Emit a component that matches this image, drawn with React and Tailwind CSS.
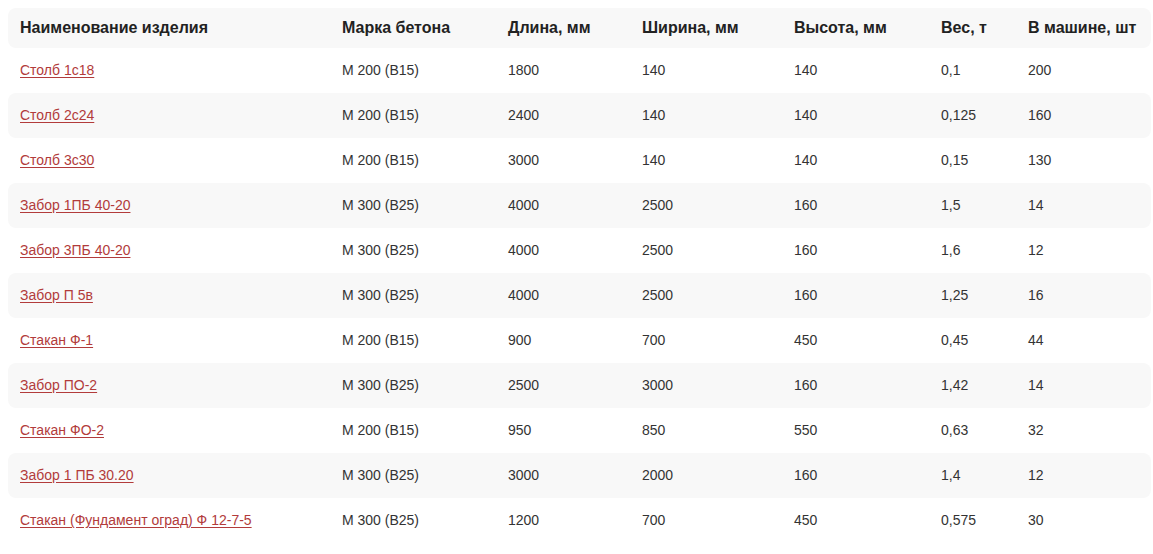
const rows = [
  ["Столб 1с18", "М 200 (В15)", "1800", "140", "140", "0,1", "200"],
  ["Столб 2с24", "М 200 (В15)", "2400", "140", "140", "0,125", "160"],
  ["Столб 3с30", "М 200 (В15)", "3000", "140", "140", "0,15", "130"],
  ["Забор 1ПБ 40-20", "М 300 (В25)", "4000", "2500", "160", "1,5", "14"],
  ["Забор 3ПБ 40-20", "М 300 (В25)", "4000", "2500", "160", "1,6", "12"],
  ["Забор П 5в", "М 300 (В25)", "4000", "2500", "160", "1,25", "16"],
  ["Стакан Ф-1", "М 200 (В15)", "900", "700", "450", "0,45", "44"],
  ["Забор ПО-2", "М 300 (В25)", "2500", "3000", "160", "1,42", "14"],
  ["Стакан ФО-2", "М 200 (В15)", "950", "850", "550", "0,63", "32"],
  ["Забор 1 ПБ 30.20", "М 300 (В25)", "3000", "2000", "160", "1,4", "12"],
  ["Стакан (Фундамент оград) Ф 12-7-5", "М 300 (В25)", "1200", "700", "450", "0,575", "30"],
];

const headers = [
  "Наименование изделия",
  "Марка бетона",
  "Длина, мм",
  "Ширина, мм",
  "Высота, мм",
  "Вес, т",
  "В машине, шт",
];

export default function App() {
  return (
    <div className="bg-white min-h-[554px] pt-2 font-['Liberation_Sans',Arial,sans-serif]">
      <table className="ml-2 w-[1143px] table-fixed border-separate border-spacing-0">
        <colgroup>
          <col className="w-[322px]" />
          <col className="w-[166px]" />
          <col className="w-[134px]" />
          <col className="w-[152px]" />
          <col className="w-[147px]" />
          <col className="w-[87px]" />
          <col />
        </colgroup>
        <thead>
          <tr className="h-10">
            {headers.map((h) => (
              <th
                key={h}
                className="bg-[#f8f8f8] px-3 text-left text-[16px] font-bold text-[#222] first:rounded-l-lg last:rounded-r-lg whitespace-nowrap"
              >
                {h}
              </th>
            ))}
          </tr>
        </thead>
        <tbody>
          {rows.map((r, i) => (
            <tr key={r[0]} className="h-[45px]">
              {r.map((c, j) => (
                <td
                  key={j}
                  className={`px-3 text-[14px] text-[#333] first:rounded-l-lg last:rounded-r-lg whitespace-nowrap ${
                    i % 2 === 1 ? "bg-[#f8f8f8]" : "bg-white"
                  }`}
                >
                  {j === 0 ? (
                    <a href="#" className="text-[#b23b3b] underline underline-offset-2">
                      {c}
                    </a>
                  ) : (
                    c
                  )}
                </td>
              ))}
            </tr>
          ))}
        </tbody>
      </table>
    </div>
  );
}
